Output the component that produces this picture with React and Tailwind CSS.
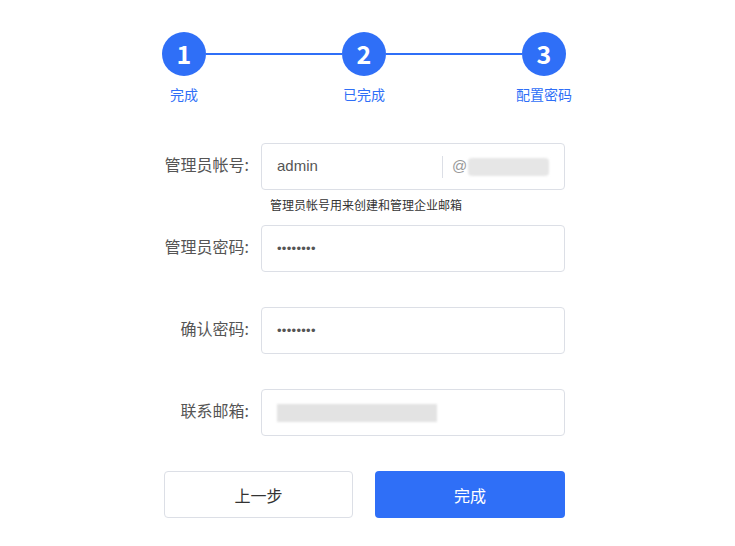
const cjk = { fontFamily: '"Microsoft YaHei", "Noto Sans CJK SC", "Liberation Sans", sans-serif' };
const latin = { fontFamily: '"Liberation Sans", Arial, sans-serif' };

function Step({ n, label }) {
  return (
    <div className="relative flex h-11 w-11 shrink-0 items-center justify-center rounded-full bg-[#2f6ff7] text-[25px] font-bold text-white">
      {n}
      <span className="absolute left-1/2 top-[52px] -translate-x-1/2 whitespace-nowrap text-[14px] font-normal text-[#2f6ff7]">
        {label}
      </span>
    </div>
  );
}

function Row({ label, children, hint }) {
  return (
    <div className="flex flex-col">
      <div className="flex items-center">
        <div className="w-[97px] shrink-0 pb-[6px] pr-3 text-right text-[16px] text-[#555]">{label}</div>
        <div className="flex h-[47px] w-[304px] items-center rounded-[4px] border border-[#dcdfe6] bg-white px-[15px] text-[15px] text-[#555]">
          {children}
        </div>
      </div>
      {hint && <div className="ml-[106px] mt-[7px] h-[15px] text-[12px] leading-[15px] text-[#333]">{hint}</div>}
    </div>
  );
}

function Dots() {
  return (
    <span className="text-[13px] tracking-[0.3px] text-[#555]" style={latin}>
      ••••••••
    </span>
  );
}

export default function App() {
  return (
    <div className="min-h-[546px] bg-white" style={cjk}>
      <div className="ml-[162px] w-[404px] pt-[32px]">
        <div className="flex items-center">
          <Step n="1" label="完成" />
          <div className="h-[2px] flex-1 bg-[#2f6ff7]" />
          <Step n="2" label="已完成" />
          <div className="h-[2px] flex-1 bg-[#2f6ff7]" />
          <Step n="3" label="配置密码" />
        </div>
      </div>

      <div className="ml-[164px] mt-[67px] flex w-[401px] flex-col">
        <Row label="管理员帐号:" hint="管理员帐号用来创建和管理企业邮箱">
          <span className="w-[165px] shrink-0" style={latin}>admin</span>
          <span className="mr-[9px] h-[22px] w-px bg-[#dcdfe6]" />
          <span className="text-[#999]" style={latin}>@</span>
          <span className="ml-[1px] h-[18px] w-[90px] rounded-sm bg-[#e6e6e6] blur-[1px]" />
        </Row>
        <div className="h-[13px]" />
        <Row label="管理员密码:">
          <Dots />
        </Row>
        <div className="h-[35px]" />
        <Row label="确认密码:">
          <Dots />
        </Row>
        <div className="h-[35px]" />
        <Row label="联系邮箱:">
          <span className="h-[18px] w-[160px] bg-[#e3e3e3] blur-[1px]" />
        </Row>
        <div className="h-[35px]" />
        <div className="flex justify-between">
          <button className="h-[47px] w-[189px] rounded-[4px] border border-[#dcdfe6] bg-white text-[16px] text-[#333]">
            上一步
          </button>
          <button className="h-[47px] w-[190px] rounded-[4px] bg-[#2f6ff7] text-[16px] text-white">
            完成
          </button>
        </div>
      </div>
    </div>
  );
}
